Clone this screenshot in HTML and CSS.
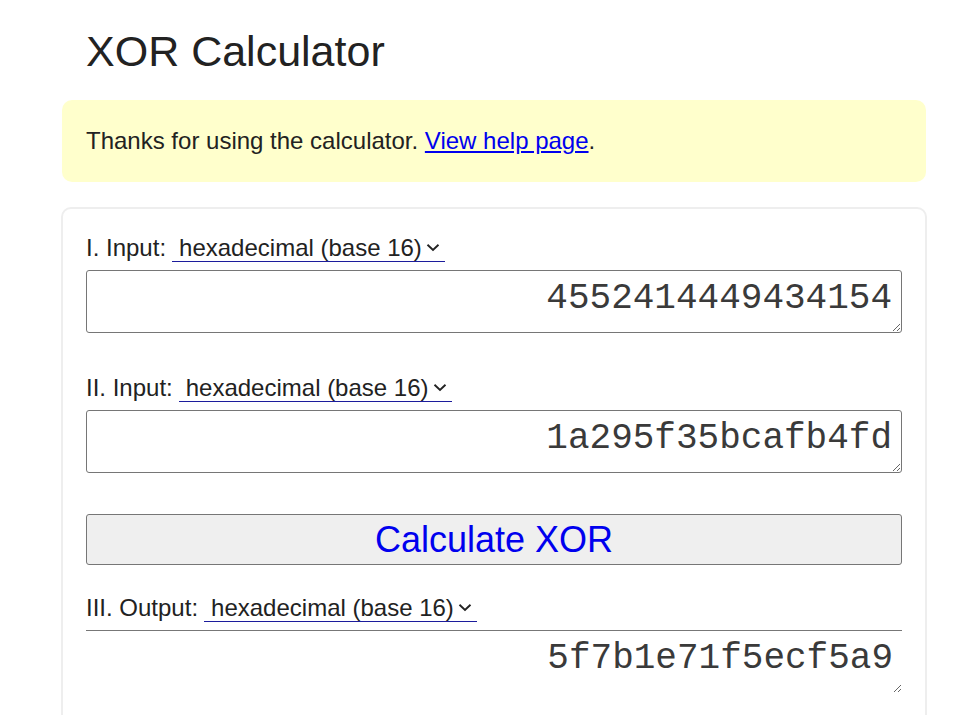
FILE: index.html
```html
<!DOCTYPE html>
<html lang="en">
<head>
    <meta charset="UTF-8">
    <meta name="viewport" content="width=device-width, initial-scale=1.0">
    <title>XOR Calculator</title>
    <link rel="stylesheet" href="styles.css">
</head>
<body>
    <div class="page">
        <h1 class="title">XOR Calculator</h1>

        <div class="notice">
            Thanks for using the calculator. <a href="#">View help page</a>.
        </div>

        <div class="calc">
            <div class="field">
                <div class="field-label">I. Input:
                    <span class="unit">
                        <select>
                            <option>binary (base 2)</option>
                            <option>decimal (base 10)</option>
                            <option selected>hexadecimal (base 16)</option>
                        </select>
                        <svg class="chev" width="14" height="9" viewBox="0 0 14 9"><path d="M1.5 1.8 L7 7 L12.5 1.8" fill="none" stroke="#222" stroke-width="1.9"/></svg>
                    </span>
                </div>
                <textarea class="num" spellcheck="false">4552414449434154</textarea>
            </div>

            <div class="field">
                <div class="field-label">II. Input:
                    <span class="unit">
                        <select>
                            <option>binary (base 2)</option>
                            <option>decimal (base 10)</option>
                            <option selected>hexadecimal (base 16)</option>
                        </select>
                        <svg class="chev" width="14" height="9" viewBox="0 0 14 9"><path d="M1.5 1.8 L7 7 L12.5 1.8" fill="none" stroke="#222" stroke-width="1.9"/></svg>
                    </span>
                </div>
                <textarea class="num" spellcheck="false">1a295f35bcafb4fd</textarea>
            </div>

            <button class="calc-btn">Calculate XOR</button>

            <div class="field output">
                <div class="field-label">III. Output:
                    <span class="unit">
                        <select>
                            <option>binary (base 2)</option>
                            <option>decimal (base 10)</option>
                            <option selected>hexadecimal (base 16)</option>
                        </select>
                        <svg class="chev" width="14" height="9" viewBox="0 0 14 9"><path d="M1.5 1.8 L7 7 L12.5 1.8" fill="none" stroke="#222" stroke-width="1.9"/></svg>
                    </span>
                </div>
                <textarea class="num result" readonly spellcheck="false">5f7b1e71f5ecf5a9</textarea>
            </div>
        </div>
    </div>
</body>
</html>
```

FILE: styles.css
```css
body {
    margin: 0;
    font-family: "Liberation Sans", Arial, sans-serif;
    font-size: 24px;
    color: #222;
    background: #fff;
}
.page {
    width: 866px;
    margin-left: 61px;
}
.title {
    font-size: 43px;
    font-weight: normal;
    margin: 27px 0 24px;
    padding-left: 25px;
}
.notice {
    margin: 0 1px;
    padding: 27px 24px;
    background-color: #ffffcc;
    border-radius: 10px;
}
.notice a {
    color: #0000ee;
}
.calc {
    margin-top: 25px;
    padding: 25px 23px 40px;
    border: 2px solid #eeeeee;
    border-radius: 10px;
}
.field {
    margin-bottom: 41px;
}
.field-label {
    display: flex;
    align-items: baseline;
    gap: 6px;
    margin-bottom: 8px;
}
.unit {
    display: inline-flex;
    align-items: center;
    border-bottom: 1px solid #1c1c9c;
}
.unit select {
    appearance: none;
    -webkit-appearance: none;
    border: none;
    background: transparent;
    font-family: inherit;
    font-size: 24px;
    color: #222;
    padding: 0 0 0 7px;
    margin: 0;
}
.chev {
    margin: 0 5px 0 4px;
}
textarea.num {
    display: block;
    box-sizing: border-box;
    width: 100%;
    height: 63px;
    padding: 7px 9px 7px 10px;
    border: 1px solid #767676;
    border-radius: 3px;
    font-family: "Liberation Mono", "Courier New", monospace;
    font-size: 36px;
    color: #3a3a3a;
    text-align: right;
    resize: vertical;
    overflow: hidden;
}
.output {
    margin-bottom: 0;
}
.output .field-label {
    margin-bottom: 0;
    padding-bottom: 8px;
}
textarea.result {
    border: none;
    border-top: 1px solid #777;
    border-radius: 0;
}
.calc-btn {
    display: block;
    width: 100%;
    height: 51px;
    margin-bottom: 29px;
    background-color: #efefef;
    border: 1px solid #767676;
    border-radius: 3px;
    color: #0000ee;
    font-family: inherit;
    font-size: 36px;
    cursor: pointer;
}
```
